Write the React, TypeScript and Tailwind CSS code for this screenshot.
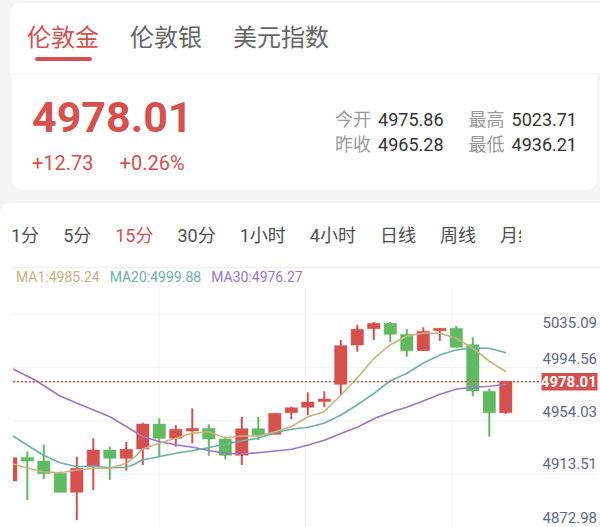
import React from "react";

const RED = "#d6504e";
const GREEN = "#5fba62";
const TAN = "#c9b27e";
const TEAL = "#6cb1a6";
const PURPLE = "#9a76cc";

type Candle = [string, number, number, number, number]; // color, bodyTop, bodyBottom, wickTop, wickBottom

const candles: Candle[] = [
  ["r", 457.7, 481, 457.7, 481],
  ["g", 457.5, 461, 451.3, 500],
  ["g", 461, 473.7, 444.7, 479],
  ["g", 473.3, 492.3, 471.7, 492.3],
  ["r", 468.3, 492.3, 456.7, 520],
  ["r", 450, 466.7, 438.3, 490],
  ["g", 450, 458.3, 446.7, 480],
  ["r", 449.3, 458.3, 442, 470.7],
  ["r", 424, 449, 422.7, 465],
  ["g", 424, 438.3, 418.3, 457.3],
  ["r", 429.3, 438.3, 425.3, 446.7],
  ["r", 428.3, 431, 408.3, 443.3],
  ["g", 428.3, 439, 424.3, 455.7],
  ["g", 439, 455.3, 436.7, 459.3],
  ["r", 428.7, 455.3, 417, 465],
  ["g", 428.7, 435, 417, 440],
  ["r", 413.3, 434.3, 413.3, 434.3],
  ["r", 407.7, 412.7, 406.7, 419.3],
  ["r", 402, 407.3, 392.3, 415.3],
  ["r", 399, 401.5, 391.3, 407.3],
  ["r", 345.7, 384.3, 340, 395],
  ["r", 329.3, 345, 324.7, 351.7],
  ["r", 323.3, 328.7, 322, 340],
  ["g", 323.3, 334.3, 322, 342.3],
  ["g", 334.3, 350.7, 329, 356.7],
  ["r", 331.3, 350.7, 327.3, 350.7],
  ["r", 328.3, 330.7, 328.3, 340.7],
  ["g", 328.3, 347.3, 326, 347.3],
  ["g", 344.7, 391, 337.3, 396.3],
  ["g", 391.3, 412.7, 388.7, 436.7],
  ["r", 381.3, 412.7, 381.3, 414],
];

const ma1 = [
  [13, 464], [27, 468], [43, 471.7], [60, 472.7], [77, 470], [93, 468.3], [110, 468.3], [126, 463.3],
  [135, 456.7], [142, 449.3], [159, 443.3], [176, 438.3], [192, 433.3], [208, 431.7], [225, 437.7],
  [242, 436], [258, 436], [275, 431.7], [291, 426.7], [308, 416.7], [324, 411.7], [341, 395],
  [357, 378.3], [374, 358.3], [390, 345], [407, 336], [423, 333.3], [440, 333.3], [456, 338.3],
  [473, 348.3], [489, 361], [506, 371.7],
];

const ma20 = [
  [13, 436], [27, 445], [43, 455], [60, 462.7], [77, 466.7], [93, 466], [110, 467.7], [126, 467.3],
  [135, 464], [142, 460], [159, 456.7], [176, 453.3], [192, 450.7], [208, 447.7], [225, 444.3],
  [242, 440.7], [258, 438.3], [275, 432.7], [291, 429.3], [308, 427.3], [324, 423.3], [341, 415],
  [357, 405], [374, 393.3], [390, 381], [407, 373.3], [423, 363.3], [440, 355], [456, 350],
  [473, 348], [489, 348.3], [506, 352.7],
];

const ma30 = [
  [13, 369], [35, 380], [60, 396], [77, 403.3], [110, 416.7], [126.7, 426.7], [143, 436.7],
  [160, 441.7], [176.7, 445], [193, 447.3], [210, 450.7], [225, 453.3], [241.7, 454], [258, 452.7],
  [291.7, 449.3], [308.3, 445], [325, 440], [341.7, 433.3], [358.3, 426.7], [375, 418.3],
  [395, 410.7], [406.7, 407.3], [423.3, 401], [440, 394.3], [456.7, 389], [473.3, 387.3],
  [490, 386.3], [505.7, 384.3],
];

const axis: [string, number][] = [
  ["5035.09", 327.5],
  ["4994.56", 363.5],
  ["4954.03", 416.8],
  ["4913.51", 469.2],
  ["4872.98", 523.4],
];

const periods = ["1分", "5分", "15分", "30分", "1小时", "4小时", "日线", "周线", "月线"];

function pts(p: number[][]) {
  return p.map(([x, y]) => `${x},${y}`).join(" ");
}

function KChart() {
  return (
    <svg width="600" height="240" viewBox="0 287 600 240" className="block">
      <defs>
        <clipPath id="plot">
          <rect x="13" y="287" width="587" height="240" />
        </clipPath>
      </defs>
      {[314, 367.3, 420.7, 474].map((y) => (
        <line key={y} x1="13" x2="597" y1={y} y2={y} stroke="#f1f1f1" strokeWidth="1" />
      ))}
      {[159, 305.5, 452].map((x) => (
        <line key={x} x1={x} x2={x} y1="287" y2="527" stroke="#f3f3f3" strokeWidth="1" />
      ))}
      <g clipPath="url(#plot)">
        {candles.map(([c, bt, bb, wt, wb], i) => {
          const cx = 10.8 + 16.5 * i;
          const col = c === "r" ? RED : GREEN;
          return (
            <g key={i}>
              <line x1={cx} x2={cx} y1={wt} y2={wb} stroke={col} strokeWidth="2" />
              <rect
                x={cx - 6.2}
                y={bt}
                width="12.4"
                height={Math.max(bb - bt, 2.5)}
                fill={col}
                stroke={col}
                strokeOpacity="0.45"
                strokeWidth="1"
              />
            </g>
          );
        })}
        <polyline points={pts(ma30)} fill="none" stroke={PURPLE} strokeWidth="1.6" strokeLinejoin="round" />
        <polyline points={pts(ma20)} fill="none" stroke={TEAL} strokeWidth="1.6" strokeLinejoin="round" />
        <polyline points={pts(ma1)} fill="none" stroke={TAN} strokeWidth="1.6" strokeLinejoin="round" />
      </g>
      <line x1="13" x2="542" y1="381.7" y2="381.7" stroke={RED} strokeWidth="1.5" strokeDasharray="2 2" />
      {axis.map(([t, y]) => (
        <text
          key={t}
          x="597"
          y={y}
          textAnchor="end"
          fontSize="15"
          fill="#5d6a84"
          fontFamily="Roboto, sans-serif"
        >
          {t}
        </text>
      ))}
      <rect x="541.5" y="373" width="56" height="17.5" fill={RED} />
      <text
        x="596.8"
        y="387.4"
        textAnchor="end"
        fontSize="15"
        fontWeight="bold"
        fill="#ffffff"
        fontFamily="Roboto, sans-serif"
      >
        4978.01
      </text>
    </svg>
  );
}

export default function App() {
  return (
    <div className="relative flex h-[527px] w-[600px] flex-col overflow-hidden bg-[#f5f5f5] font-['Roboto','Noto_Sans_CJK_SC',sans-serif]">
      {/* market tabs */}
      <div className="ml-[10px] mt-[3px] h-[70px] shrink-0 rounded-tl-[10px] bg-white">
        <div className="flex gap-[31px] pl-[17px] pt-[17px]">
          <div className="flex flex-col items-center">
            <span className="text-[24px] leading-[36px] text-[#d6504e]">伦敦金</span>
            <span className="mt-[1px] block h-[4px] w-[57px] rounded-full bg-[#d6504e]" />
          </div>
          <span className="text-[24px] leading-[36px] text-[#666666]">伦敦银</span>
          <span className="text-[24px] leading-[36px] text-[#666666]">美元指数</span>
        </div>
      </div>

      {/* quote */}
      <div className="ml-[12px] mr-[3px] mt-[1px] flex h-[116px] shrink-0 justify-between rounded-b-[10px] bg-white px-[20px]">
        <div className="pt-[22px]">
          <div className="text-[43px] font-bold leading-[43px] text-[#d6504e]">4978.01</div>
          <div className="mt-[12px] flex gap-[26px] text-[20px] leading-[24px] text-[#d6504e]">
            <span>+12.73</span>
            <span>+0.26%</span>
          </div>
        </div>
        <div className="grid grid-cols-2 content-start gap-x-[25px] pt-[33px] text-[18px] leading-[25px]">
          {[
            ["今开", "4975.86"],
            ["最高", "5023.71"],
            ["昨收", "4965.28"],
            ["最低", "4936.21"],
          ].map(([k, v]) => (
            <div key={k} className="flex gap-[7px]">
              <span className="text-[#9a9a9a]">{k}</span>
              <span className="text-[#333333]">{v}</span>
            </div>
          ))}
        </div>
      </div>

      {/* chart */}
      <div className="mt-[13px] flex-1 rounded-tl-[10px] bg-white">
        <div className="flex h-[64px] w-[521px] items-center gap-[24px] overflow-hidden whitespace-nowrap pl-[11px] text-[18px] text-[#4f4f4f]">
          {periods.map((p) => (
            <span key={p} className={p === "15分" ? "shrink-0 text-[#d6504e]" : "shrink-0"}>
              {p}
            </span>
          ))}
        </div>
        <div className="ml-[10px] h-px bg-[#f0f0f0]" />
        <div className="flex h-[19px] items-center gap-[10px] pl-[16px] text-[14px]">
          <span className="text-[#c9b27e]">MA1:4985.24</span>
          <span className="text-[#6cb1a6]">MA20:4999.88</span>
          <span className="text-[#9a76cc]">MA30:4976.27</span>
        </div>
        <KChart />
      </div>
    </div>
  );
}
